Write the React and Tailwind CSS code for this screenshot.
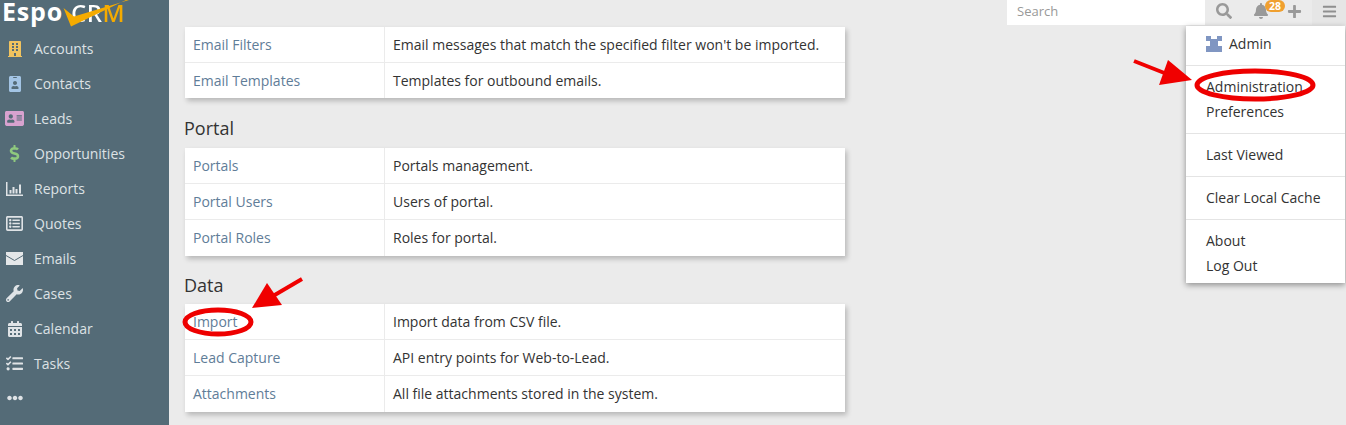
import React from "react";
import {
  FaBuilding, FaIdBadge, FaAddressCard, FaDollarSign, FaRegListAlt,
  FaWrench, FaCalendarAlt, FaTasks, FaEllipsisH, FaSearch, FaBell, FaPlus, FaBars,
} from "react-icons/fa";

const ReportsIcon = ({ size }) => (
  <svg width={size} height={size - 3} viewBox="0 0 17 14" fill="currentColor">
    <path d="M0 0H1.5V12.5H17V14H0Z" />
    <path d="M3.5 8H5.5V11.5H3.5ZM6.5 5H8.5V11.5H6.5ZM9.5 7H11.5V11.5H9.5ZM13 2.5H15V11.5H13Z" />
  </svg>
);

const MailIcon = ({ size }) => (
  <svg width={size} height={size - 4} viewBox="0 0 17 13">
    <path d="M0 0H17V13H0Z" fill="currentColor" />
    <path d="M0 3.5L8.5 8.5L17 3.5" fill="none" stroke="#546b77" strokeWidth="1" />
  </svg>
);

const navItems = [
  { label: "Accounts", icon: FaBuilding, color: "text-[#f0c35f]", size: 16 },
  { label: "Contacts", icon: FaIdBadge, color: "text-[#a3c4e4]", size: 16 },
  { label: "Leads", icon: FaAddressCard, color: "text-[#d8a2cf]", size: 19 },
  { label: "Opportunities", icon: FaDollarSign, color: "text-[#8fc97e]", size: 17 },
  { label: "Reports", icon: ReportsIcon, color: "text-[#dfe3e6]", size: 17 },
  { label: "Quotes", icon: FaRegListAlt, color: "text-[#dfe3e6]", size: 17 },
  { label: "Emails", icon: MailIcon, color: "text-[#e4e7e9]", size: 17 },
  { label: "Cases", icon: FaWrench, color: "text-[#dfe3e6]", size: 17 },
  { label: "Calendar", icon: FaCalendarAlt, color: "text-[#dfe3e6]", size: 16 },
  { label: "Tasks", icon: FaTasks, color: "text-[#dfe3e6]", size: 17 },
];

const emailRows = [
  ["Email Filters", "Email messages that match the specified filter won't be imported."],
  ["Email Templates", "Templates for outbound emails."],
];
const portalRows = [
  ["Portals", "Portals management."],
  ["Portal Users", "Users of portal."],
  ["Portal Roles", "Roles for portal."],
];
const dataRows = [
  ["Import", "Import data from CSV file."],
  ["Lead Capture", "API entry points for Web-to-Lead."],
  ["Attachments", "All file attachments stored in the system."],
];

const AdminTable = ({ rows, compact }) => (
  <div className={`w-[660px] bg-white shadow-[2px_3px_5px_rgba(0,0,0,0.22)] ${compact ? "h-[71px] overflow-hidden" : ""}`}>
    {rows.map(([name, text], i) => (
      <div key={name} className={`flex h-9 items-center ${i < rows.length - 1 ? "border-b border-[#ebebeb]" : ""}`}>
        <div className="flex h-full w-[200px] items-center border-r border-[#ebebeb] pl-2 text-[#5f7d98]">{name}</div>
        <div className="pl-2 text-[#333]">{text}</div>
      </div>
    ))}
  </div>
);

const MenuItem = ({ children }) => (
  <div className="flex h-[25px] items-center pl-5 text-[#333]">{children}</div>
);

const Divider = () => <div className="my-[8.5px] h-px bg-[#e4e4e4]" />;

const Logo = () => (
  <div className="relative h-[27px]">
    <span className="absolute left-[2px] top-0 text-[25px] leading-[23px] font-bold tracking-[0.8px] text-white">Espo</span>
    <span className="absolute left-[71px] top-[2px] bg-[linear-gradient(90deg,#fff_0,#fff_31px,#f5ab00_33px)] bg-clip-text text-[24px] leading-[22px] font-semibold tracking-[0.5px] text-transparent">CRM</span>
    <svg className="absolute left-0 top-0" width="169" height="27" viewBox="0 0 169 27">
      <path d="M63.5 8 L74 16.5 L129 0 L126 0 L71 26.5 Z" fill="#f5ab00" />
    </svg>
  </div>
);

export default function App() {
  return (
    <div className="relative flex h-[425px] w-[1346px] overflow-hidden bg-[#ebebeb] font-['Open_Sans',sans-serif] text-sm">
      {/* Sidebar */}
      <aside className="h-full w-[169px] shrink-0 bg-[#546b77]">
        <Logo />
        <nav className="mt-[4px]">
          {navItems.map(({ label, icon: Icon, color, size }) => (
            <div key={label} className="flex h-[35px] items-center text-[#dde2e5]">
              <span className={`flex w-[28px] shrink-0 items-center justify-center pl-[1px] ${color}`}>
                <Icon size={size} />
              </span>
              <span className="ml-[6px]">{label}</span>
            </div>
          ))}
          <div className="flex h-[34px] w-[28px] items-center justify-center pl-[1px] text-[#dfe3e6]">
            <FaEllipsisH size={16} />
          </div>
        </nav>
      </aside>

      {/* Main column */}
      <main className="min-w-0 flex-1">
        <div className="flex h-[27px] justify-end">
          <div className="flex h-[25px] w-[198px] items-center bg-white pb-[3px] pl-[10px] text-[13px] text-[#999]">Search</div>
          <div className="flex h-[25px] w-[107px] items-center pb-[3px] text-[#999]">
            <FaSearch size={16} className="ml-[11px]" />
            <span className="relative ml-[21px]">
              <FaBell size={16} />
              <span className="absolute left-[12px] top-[-3px] h-[12px] w-[20px] rounded-[6px] bg-[#f0a030] text-center text-[10.5px] leading-[12px] font-bold text-white">28</span>
            </span>
            <FaPlus size={15} className="ml-[18px]" />
          </div>
          <div className="flex h-[25px] w-[34px] items-center justify-center bg-[#e6e6e6] pb-[3px] text-[#8f8f8f]">
            <FaBars size={15} />
          </div>
        </div>

        <div className="pl-4">
          <AdminTable rows={emailRows} compact />
          <h3 className="mt-[18px] -ml-px h-[32px] text-lg leading-[24px] text-[#333]">Portal</h3>
          <AdminTable rows={portalRows} />
          <h3 className="mt-[17px] -ml-px h-[31px] text-lg leading-[24px] text-[#333]">Data</h3>
          <AdminTable rows={dataRows} />
        </div>
      </main>

      {/* Open user menu */}
      <div className="absolute left-[1186px] top-[26px] w-[159px] bg-white pt-[5px] pb-[5px] shadow-[0_2px_6px_rgba(0,0,0,0.4)]">
        <MenuItem>
          <svg className="mr-[7px]" width="16" height="16" viewBox="0 0 16 16">
            <path d="M0 0H5V3H11V0H16V5H12V10H16V16H0V10H4V5H0Z" fill="#8096c2" />
          </svg>
          Admin
        </MenuItem>
        <Divider />
        <MenuItem>Administration</MenuItem>
        <MenuItem>Preferences</MenuItem>
        <Divider />
        <MenuItem>Last Viewed</MenuItem>
        <Divider />
        <MenuItem>Clear Local Cache</MenuItem>
        <Divider />
        <MenuItem>About</MenuItem>
        <MenuItem>Log Out</MenuItem>
      </div>

      {/* Red annotations drawn over the screenshot */}
      <svg className="pointer-events-none absolute left-0 top-0" width="1346" height="425" viewBox="0 0 1346 425">
        <ellipse cx="218" cy="322" rx="33" ry="12" fill="none" stroke="#ee0000" strokeWidth="5" />
        <path d="M302 279 L273 296" stroke="#f00000" strokeWidth="4" />
        <path d="M252 308 L267 283 L282 305 Z" fill="#f00000" />
        <ellipse cx="1255" cy="85" rx="58" ry="14" fill="none" stroke="#ee0000" strokeWidth="5" />
        <path d="M1134 61 L1172 76" stroke="#f00000" strokeWidth="4" />
        <path d="M1192 80 L1168 60 L1159 85 Z" fill="#f00000" />
      </svg>
    </div>
  );
}
